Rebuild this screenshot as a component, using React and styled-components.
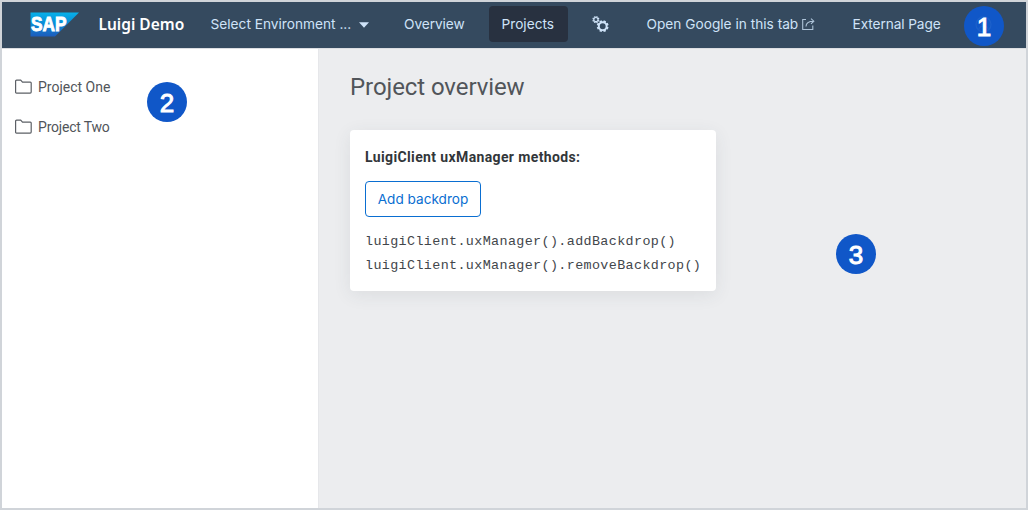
import React from "react";
import styled, { createGlobalStyle } from "styled-components";

const GlobalStyle = createGlobalStyle`
  *, *::before, *::after { box-sizing: border-box; }
  body { margin: 0; }
`;

const Frame = styled.div`
  position: relative;
  display: flex;
  flex-direction: column;
  width: 1028px;
  height: 510px;
  border: 2px solid #d0d4d9;
  background: #ecedef;
  font-family: Roboto, "Liberation Sans", sans-serif;
  overflow: hidden;
`;

const ShellBar = styled.header`
  display: flex;
  align-items: center;
  flex: none;
  height: 46px;
  padding: 0 0 2px 28px;
  background: #354a5f;
`;

const Logo = styled.svg`
  display: block;
  flex: none;
  width: 50px;
  height: 25px;
`;

const Product = styled.div`
  flex: none;
  width: 118px;
  padding-left: 18.5px;
  color: #fff;
  font: 600 15.5px/20px "Noto Sans", sans-serif;
  white-space: nowrap;
`;

const NavItem = styled.a`
  display: flex;
  align-items: center;
  flex: none;
  width: ${(p) => p.$width}px;
  height: 36px;
  padding-left: 12.5px;
  border-radius: 4px;
  background: ${(p) => (p.$active ? "#283140" : "transparent")};
  color: #cfe3f8;
  font-family: Inter, sans-serif;
  font-size: 13.7px;
  letter-spacing: ${(p) => p.$spacing || 0}px;
  white-space: nowrap;
`;

const Caret = styled.svg`
  width: 10px;
  height: 6px;
  margin: 1px 0 0 8px;
`;

const NavIcon = styled.svg`
  width: 17px;
  height: 17px;
  margin-left: 11px;
`;

const ShareIcon = styled.svg`
  width: 13px;
  height: 13px;
  margin-left: 4px;
`;

const Body = styled.div`
  display: flex;
  flex: 1;
  border-top: 1px solid #dcdee2;
`;

const Sidebar = styled.nav`
  flex: none;
  width: 317px;
  padding-top: 18px;
  background: #fff;
  border-right: 1px solid #e6e7ea;
`;

const SideItem = styled.a`
  display: flex;
  align-items: center;
  height: 40px;
  padding-left: 13px;
  gap: 6px;
  color: #51555a;
  font-size: 14px;
  letter-spacing: ${(p) => p.$spacing || 0}px;
`;

const FolderIcon = styled.svg`
  width: 17px;
  height: 16px;
`;

const Main = styled.main`
  flex: 1;
  padding: 22px 0 0 31px;
`;

const Title = styled.h1`
  margin: 0;
  color: #51555a;
  font-size: 24px;
  font-weight: 400;
  line-height: 32px;
  letter-spacing: -0.08px;
`;

const Card = styled.section`
  width: 366px;
  height: 161px;
  margin-top: 27px;
  padding: 16px 15px 0;
  border-radius: 4px;
  background: #fff;
  box-shadow: 0 4px 18px rgba(60, 70, 80, 0.09);
`;

const CardTitle = styled.h2`
  margin: 0 0 12px;
  color: #32363a;
  font-size: 14px;
  font-weight: 700;
  line-height: 23px;
  letter-spacing: 0.37px;
  white-space: nowrap;
`;

const Button = styled.button`
  display: block;
  width: 116px;
  height: 36px;
  padding: 0 0 1px;
  border: 1px solid #0a6ed1;
  border-radius: 4px;
  background: #fff;
  color: #0a6ed1;
  font-family: Inter, sans-serif;
  font-size: 13.6px;
`;

const CodeLine = styled.code`
  display: block;
  color: #42464b;
  font: 13.4px/24px "Liberation Mono", monospace;
  letter-spacing: 0.37px;
  white-space: nowrap;
`;

const CodeBlock = styled.div`
  margin-top: 13px;
`;

const Badge = styled.span`
  position: absolute;
  left: ${(p) => p.$x}px;
  top: ${(p) => p.$y}px;
  display: flex;
  align-items: center;
  justify-content: center;
  width: 40px;
  height: 40px;
  padding-top: 2px;
  border-radius: 50%;
  background: #1057c8;
  color: #fff;
  font: 400 26px/38px "Liberation Sans", sans-serif;
  -webkit-text-stroke: 1px #fff;
`;

const ProfileIcon = styled.svg`
  position: absolute;
  left: 11px;
  top: 10px;
  width: 17px;
  height: 17px;
`;

const BadgeNumber = styled.span`
  position: relative;
`;

const LogoText = styled.text`
  font: 700 19.5px "Liberation Sans", sans-serif;
  fill: #fff;
  stroke: #fff;
  stroke-width: 0.9px;
`;

function Gear({ cx, cy, r, teeth, tooth, width }) {
  return (
    <g transform={`translate(${cx} ${cy})`} stroke="#cfe3f8" fill="none" strokeWidth={width}>
      <circle r={r} />
      {Array.from({ length: teeth }, (_, i) => (
        <path key={i} d={`M0 ${-r - 0.2}V${-r - tooth}`} transform={`rotate(${(i + 0.5) * (360 / teeth)})`} strokeWidth={width * 1.3} />
      ))}
    </g>
  );
}

function Folder() {
  return (
    <FolderIcon viewBox="0 0 17 16" fill="none" stroke="#5c6066" strokeWidth="1.2">
      <path d="M.6 13V2.2Q.6 1.2 1.6 1.2H5.7L7.5 3.2H15.3Q16.2 3.2 16.2 4.1V13.1Q16.2 14.1 15.2 14.1H1.6Q.6 14.1 .6 13Z" />
    </FolderIcon>
  );
}

export default function App() {
  return (
    <>
      <GlobalStyle />
      <Frame>
        <ShellBar>
          <Logo viewBox="0 0 50 25">
            <defs>
              <linearGradient id="sapBlue" x1="0" y1="0" x2="0" y2="1">
                <stop offset="0" stopColor="#07b1ea" />
                <stop offset=".5" stopColor="#0b88d5" />
                <stop offset="1" stopColor="#1d5cbc" />
              </linearGradient>
            </defs>
            <path d="M.5 .5H49L25 24.5H.5Z" fill="url(#sapBlue)" />
            <LogoText x="1" y="19.3" textLength="35.5" lengthAdjust="spacingAndGlyphs">SAP</LogoText>
          </Logo>
          <Product>Luigi Demo</Product>
          <NavItem $width={193.5}>
            Select Environment ...
            <Caret viewBox="0 0 10 6"><path d="M0 .3H10L5 5.7Z" fill="#cfe3f8" /></Caret>
          </NavItem>
          <NavItem $width={97.5} $spacing={-0.08}>Overview</NavItem>
          <NavItem $width={79} $active>Projects</NavItem>
          <NavItem $width={66}>
            <NavIcon viewBox="0 0 17 17">
              <Gear cx={3.9} cy={3.6} r={2.1} teeth={8} tooth={1.4} width={1.2} />
              <Gear cx={10.7} cy={10.2} r={3.9} teeth={8} tooth={2} width={1.9} />
            </NavIcon>
          </NavItem>
          <NavItem $width={206}>
            Open Google in this tab
            <ShareIcon viewBox="0 0 13 13" fill="none" stroke="#adc3d8" strokeWidth="1.1">
              <path d="M4 1.5H.7V11.5H10.8V7.5M4 8.5C4 5 6.2 3.2 11.7 3.2M9 .6L11.8 3.2L9 5.8" />
            </ShareIcon>
          </NavItem>
          <NavItem $width={110} $spacing={-0.1}>External Page</NavItem>
        </ShellBar>
        <Body>
          <Sidebar>
            <SideItem><Folder />Project One</SideItem>
            <SideItem $spacing={-0.2}><Folder />Project Two</SideItem>
          </Sidebar>
          <Main>
            <Title>Project overview</Title>
            <Card>
              <CardTitle>LuigiClient uxManager methods:</CardTitle>
              <Button>Add backdrop</Button>
              <CodeBlock>
                <CodeLine>luigiClient.uxManager().addBackdrop()</CodeLine>
                <CodeLine>luigiClient.uxManager().removeBackdrop()</CodeLine>
              </CodeBlock>
            </Card>
          </Main>
        </Body>
        <Badge $x={962} $y={4}>
          <ProfileIcon viewBox="0 0 17 17" fill="none" stroke="#1c60ca" strokeWidth="1.3">
            <circle cx="8.5" cy="8.5" r="7.5" />
            <circle cx="8.5" cy="6.3" r="2.7" />
            <path d="M3.5 14Q4.5 9.8 8.5 9.8T13.5 14" />
          </ProfileIcon>
          <BadgeNumber>1</BadgeNumber>
        </Badge>
        <Badge $x={145} $y={80}>2</Badge>
        <Badge $x={834} $y={232}>3</Badge>
      </Frame>
    </>
  );
}
